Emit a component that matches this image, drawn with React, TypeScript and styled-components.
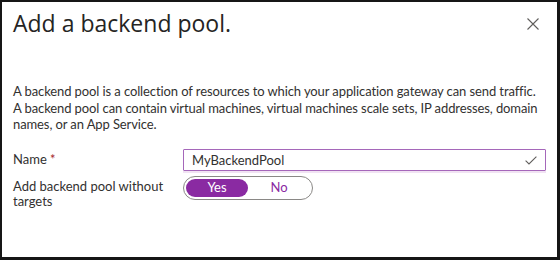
import styled, { createGlobalStyle } from "styled-components";

const GlobalStyle = createGlobalStyle`
    html, body {
        margin: 0;
        padding: 0;
        background: #ffffff;
    }
    * {
        box-sizing: border-box;
    }
`;

const App = () => {
    return (
        <>
            <GlobalStyle />
            <StyledFrame>
                <StyledHeader>
                    <StyledTitle>Add a backend pool.</StyledTitle>
                    <StyledClose aria-label="Close">
                        <svg width="12" height="12" viewBox="0 0 12 12">
                            <path d="M0.5 0.5 L11.5 11.5 M11.5 0.5 L0.5 11.5" stroke="#605e5c" strokeWidth="1.1" fill="none" />
                        </svg>
                    </StyledClose>
                </StyledHeader>

                <StyledText>
                    A backend pool is a collection of resources to which your application gateway can send traffic.
                    <br />
                    A backend pool can contain virtual machines, virtual machines scale sets, IP addresses, domain
                    <br />
                    names, or an App Service.
                </StyledText>

                <StyledForm>
                    <StyledLabel>
                        Name <StyledRequired>*</StyledRequired>
                    </StyledLabel>
                    <StyledInputWrap>
                        <StyledInput defaultValue="MyBackendPool" />
                        <StyledCheck width="12" height="9" viewBox="0 0 12 9">
                            <path d="M0.6 4.6 L4 8 L11.4 0.6" stroke="#605e5c" strokeWidth="1.1" fill="none" />
                        </StyledCheck>
                    </StyledInputWrap>

                    <StyledLabel>Add backend pool without targets</StyledLabel>
                    <StyledToggle>
                        <StyledOption $active>Yes</StyledOption>
                        <StyledOption>No</StyledOption>
                    </StyledToggle>
                </StyledForm>
            </StyledFrame>
        </>
    );
};

const StyledFrame = styled.div`
    width: 560px;
    height: 260px;
    background: #ffffff;
    border-style: solid;
    border-color: #161616;
    border-width: 2px 3px 3px 2px;
    padding: 0 11px 0 11px;
    font-family: "Lato", "Open Sans", sans-serif;
    color: #323130;
    overflow: hidden;
`;

const StyledHeader = styled.div`
    display: flex;
    justify-content: space-between;
    align-items: flex-start;
    padding-top: 5px;
`;

const StyledTitle = styled.h1`
    margin: 0;
    font-family: "Open Sans", sans-serif;
    font-size: 23px;
    font-weight: 400;
    line-height: 32px;
    color: #252423;
`;

const StyledClose = styled.div`
    display: flex;
    padding: 11px 7px 0 0;
`;

const StyledText = styled.p`
    margin: 44px 0 0 0;
    font-size: 13px;
    letter-spacing: -0.1px;
    line-height: 16.5px;
    white-space: nowrap;
`;

const StyledForm = styled.div`
    display: grid;
    grid-template-columns: 170px 1fr;
    row-gap: 5px;
    margin-top: 16px;
    font-size: 13px;
    line-height: 15.5px;
`;

const StyledLabel = styled.div`
    padding-top: 3px;
    padding-right: 8px;
`;

const StyledRequired = styled.span`
    color: #a4262c;
`;

const StyledInputWrap = styled.div`
    position: relative;
    height: 22px;
    box-shadow: 0 2px 0 #f1e3f3;
`;

const StyledInput = styled.input`
    width: 100%;
    height: 22px;
    border: 1px solid #a567ba;
    border-radius: 1px;
    padding: 0 24px 0 8px;
    font-family: inherit;
    font-size: 13px;
    color: #323130;
    outline: none;
    background: #ffffff;
`;

const StyledCheck = styled.svg`
    position: absolute;
    right: 9px;
    top: 7px;
`;

const StyledToggle = styled.div`
    display: flex;
    align-items: center;
    width: 130px;
    height: 24px;
    border: 1px solid #8a8886;
    border-radius: 12px;
    padding: 0 2px;
`;

const StyledOption = styled.div<{ $active?: boolean }>`
    flex: 1;
    height: 18px;
    display: flex;
    align-items: center;
    justify-content: center;
    border-radius: 9px;
    font-size: 13px;
    background: ${(p) => (p.$active ? "#8a2aa2" : "transparent")};
    color: ${(p) => (p.$active ? "#ffffff" : "#8a2aa2")};
`;

export default App;
